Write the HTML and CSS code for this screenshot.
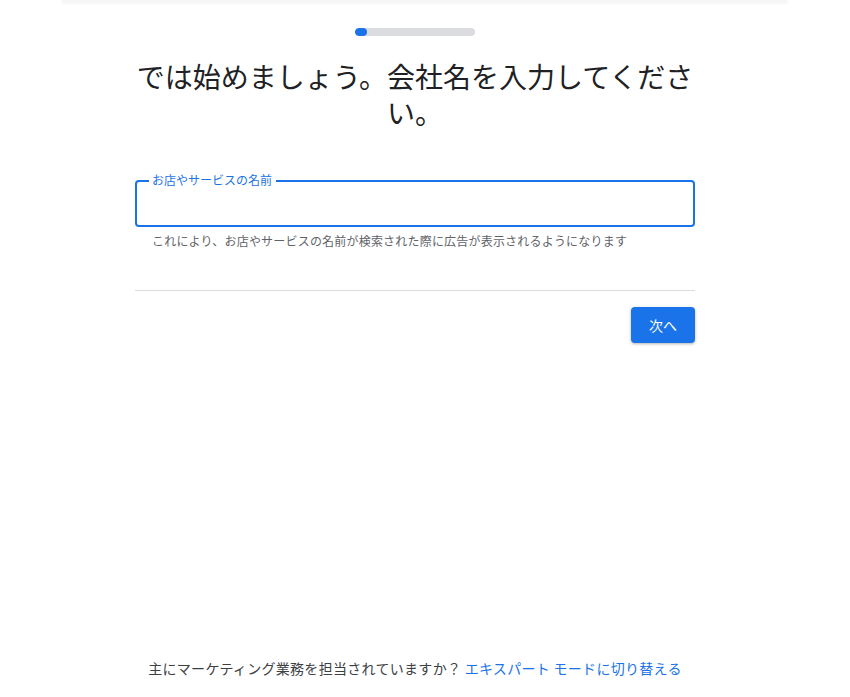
FILE: index.html
```html
<!DOCTYPE html>
<html lang="ja">
<head>
<meta charset="utf-8">
<link rel="stylesheet" href="styles.css">
</head>
<body>
<div class="topbar"></div>
<main class="main">
  <div class="progress"><div class="progress-fill"></div></div>
  <h1 class="title">では始めましょう。会社名を入力してください。</h1>
  <div class="field">
    <div class="field-box">
      <span class="field-label">お店やサービスの名前</span>
    </div>
    <div class="field-help">これにより、お店やサービスの名前が検索された際に広告が表示されるようになります</div>
  </div>
  <hr class="divider">
  <div class="actions"><button class="btn">次へ</button></div>
</main>
<footer class="footer">主にマーケティング業務を担当されていますか？ <a class="link">エキスパート モードに切り替える</a></footer>
</body>
</html>
```
FILE: styles.css
```css
html, body { margin: 0; padding: 0; }
body {
  width: 850px;
  height: 697px;
  display: flex;
  flex-direction: column;
  font-family: "Noto Sans CJK JP", "Liberation Sans", sans-serif;
  background: #fff;
  color: #202124;
  overflow: hidden;
}
.topbar {
  width: 726px;
  height: 2px;
  margin-left: 62px;
  background: #f6f6f6;
  box-shadow: 0 1px 3px rgba(0,0,0,0.08);
}
.main {
  width: 560px;
  margin-left: 135px;
  padding-top: 26px;
}
.progress {
  width: 120px;
  height: 8px;
  margin-left: 220px;
  background: #dadce0;
  border-radius: 4px;
  overflow: hidden;
}
.progress-fill {
  width: 12px;
  height: 8px;
  background: #1a73e8;
  border-radius: 4px;
}
.title {
  margin: 22px 0 0;
  font-size: 28px;
  line-height: 36px;
  font-weight: 400;
  text-align: center;
  color: #202124;
}
.field { margin-top: 50px; }
.field-box {
  position: relative;
  height: 43px;
  border: 2px solid #1a73e8;
  border-radius: 4px;
}
.field-label {
  position: absolute;
  left: 12px;
  top: -10px;
  padding: 0 4px 0 3px;
  background: #fff;
  font-size: 12px;
  line-height: 16px;
  color: #1a73e8;
}
.field-help {
  margin: 6px 0 0 17px;
  font-size: 12px;
  line-height: 16px;
  letter-spacing: 0.2px;
  color: #5f6368;
}
.divider {
  margin: 41px 0 0;
  border: 0;
  border-top: 1px solid #dadce0;
}
.actions {
  display: flex;
  justify-content: flex-end;
  margin-top: 16px;
}
.btn {
  width: 64px;
  height: 36px;
  border: 0;
  border-radius: 4px;
  background: #1a73e8;
  color: #fff;
  font-family: inherit;
  font-size: 14px;
  box-shadow: 0 1px 3px rgba(0,0,0,0.3);
}
.footer {
  margin-top: auto;
  width: 560px;
  margin-left: 135px;
  padding-bottom: 19px;
  text-align: center;
  font-size: 14px;
  line-height: 20px;
  letter-spacing: 0.3px;
  color: #3c4043;
}
.link { color: #1a73e8; }
```
